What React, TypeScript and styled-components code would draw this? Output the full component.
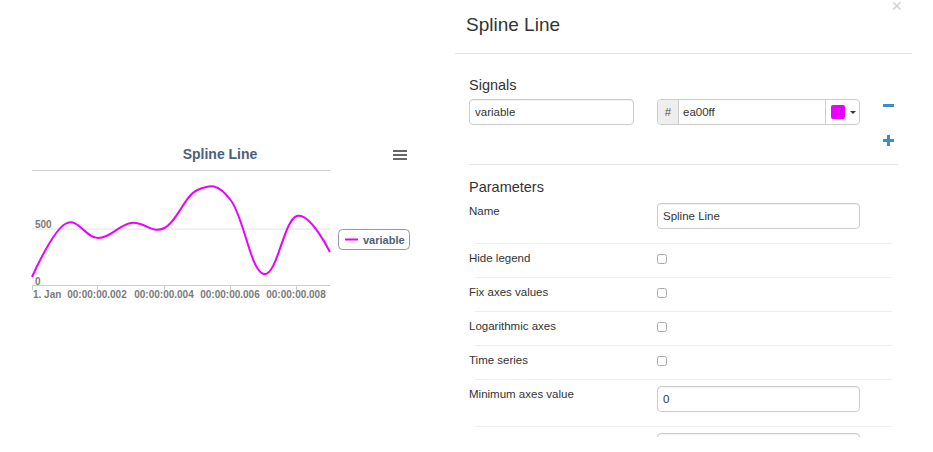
import styled, { createGlobalStyle } from "styled-components";

const GlobalStyle = createGlobalStyle`
  html, body {
    margin: 0;
    padding: 0;
    background: #ffffff;
    font-family: "Liberation Sans", Arial, sans-serif;
    color: #333;
  }
`;

const Page = styled.div`
  display: flex;
  width: 933px;
  height: 452px;
  overflow: hidden;
`;

const PreviewPane = styled.div`
  width: 420px;
  flex-shrink: 0;
  padding-top: 140px;
`;

const Dialog = styled.div`
  position: relative;
  width: 457px;
  height: 437px;
  margin-left: 35px;
  overflow: hidden;
`;

const DialogHeader = styled.div`
  height: 53px;
  border-bottom: 1px solid #e5e5e5;
  padding-left: 11px;
`;

const DialogTitle = styled.h3`
  margin: 0;
  font-size: 19px;
  font-weight: normal;
  line-height: 49px;
  color: #333;
`;

const CloseButton = styled.span`
  position: absolute;
  top: 0;
  right: 10px;
  font-size: 18px;
  line-height: 12px;
  color: #cfcfcf;
`;

const DialogBody = styled.div`
  padding: 0 14px;
`;

const Section = styled.div<{ divided?: boolean }>`
  padding-top: ${({ divided }) => (divided ? "22px" : "13px")};
  padding-bottom: ${({ divided }) => (divided ? "18px" : "0")};
  border-bottom: ${({ divided }) => (divided ? "1px solid #e5e5e5" : "none")};
`;

const SectionTitle = styled.h4<{ spacing: number }>`
  margin: 0 0 ${({ spacing }) => spacing}px;
  font-size: 14.5px;
  font-weight: normal;
  line-height: 18px;
  color: #333;
`;

const SignalRow = styled.div`
  display: flex;
  align-items: flex-start;
`;

const TextInput = styled.input<{ width: number }>`
  box-sizing: border-box;
  width: ${({ width }) => width}px;
  height: 26px;
  padding: 0 5px;
  border: 1px solid #ccc;
  border-radius: 4px;
  box-shadow: inset 0 1px 1px rgba(0, 0, 0, 0.06);
  font-family: "Liberation Sans", Arial, sans-serif;
  font-size: 11.5px;
  color: #333;
  outline: none;
`;

const ColorGroup = styled.div`
  display: flex;
  box-sizing: border-box;
  width: 203px;
  height: 26px;
  margin-left: 23px;
  border: 1px solid #ccc;
  border-radius: 4px;
  overflow: hidden;
`;

const Addon = styled.span`
  display: flex;
  align-items: center;
  justify-content: center;
  width: 20px;
  background: #eeeeee;
  border-right: 1px solid #ccc;
  font-size: 11.5px;
  color: #555;
`;

const ColorText = styled.span`
  flex: 1;
  display: flex;
  align-items: center;
  padding-left: 4px;
  font-size: 11.5px;
  color: #333;
`;

const SwatchButton = styled.span`
  display: flex;
  align-items: center;
  gap: 5px;
  width: 34px;
  box-sizing: border-box;
  padding-left: 5px;
  border-left: 1px solid #ccc;
`;

const Swatch = styled.span<{ color: string }>`
  width: 14px;
  height: 14px;
  border-radius: 2px;
  background: ${({ color }) => color};
`;

const Caret = styled.span`
  width: 0;
  height: 0;
  border-left: 3px solid transparent;
  border-right: 3px solid transparent;
  border-top: 3px solid #333;
`;

const ActionColumn = styled.div`
  display: flex;
  flex-direction: column;
  gap: 24px;
  margin-left: 23px;
  padding-top: 1px;
`;

const FormRow = styled.div<{ first?: boolean; tall?: boolean }>`
  display: flex;
  align-items: flex-start;
  margin: 0 6px;
  padding: 6px 0 ${({ tall }) => (tall ? "14px" : "11px")};
  border-top: 1px solid ${({ first }) => (first ? "transparent" : "#eee")};
`;

const FieldLabel = styled.label`
  width: 188px;
  margin-left: -6px;
  flex-shrink: 0;
  font-size: 11.5px;
  line-height: 16px;
  color: #333;
`;

const CheckBox = styled.input`
  appearance: none;
  box-sizing: border-box;
  width: 10px;
  height: 10px;
  margin: 4px 0 0;
  border: 1px solid #a8a8a8;
  border-radius: 2.5px;
  background: #fff;
`;

const ChartSvg = styled.svg`
  display: block;
  overflow: visible;
`;

// one value per ms step, given as the plot's pixel row
const data = [277, 224, 238, 223, 228, 190, 200, 274, 216, 252].map((y, i) => ({
  x: 32 + i * 33.1,
  y: y - 140,
}));

const splinePath = () => {
  const smoothing = 1.5;
  const denom = smoothing + 1;
  const conts = data.map((p, i) => {
    const last = data[i - 1];
    const next = data[i + 1];
    if (!last || !next) return { lx: p.x, ly: p.y, rx: p.x, ry: p.y };
    const lx = (smoothing * p.x + last.x) / denom;
    let ly = (smoothing * p.y + last.y) / denom;
    const rx = (smoothing * p.x + next.x) / denom;
    let ry = (smoothing * p.y + next.y) / denom;
    const corr = ((ry - ly) * (rx - p.x)) / (rx - lx) + p.y - ry;
    ly += corr;
    ry += corr;
    return { lx, ly, rx, ry };
  });
  let d = `M ${data[0].x} ${data[0].y}`;
  for (let i = 1; i < data.length; i++) {
    d += ` C ${conts[i - 1].rx} ${conts[i - 1].ry} ${conts[i].lx} ${conts[i].ly} ${data[i].x} ${data[i].y}`;
  }
  return d;
};

const xLabels = [
  { x: 97, t: "00:00:00.002" },
  { x: 164, t: "00:00:00.004" },
  { x: 230, t: "00:00:00.006" },
  { x: 296, t: "00:00:00.008" },
];

const axisText = {
  fontFamily: "Liberation Sans, Arial, sans-serif",
  fontSize: 10,
  fontWeight: 700,
  fill: "#7a7a7a",
};

const ChartPreview = () => (
  <ChartSvg width={420} height={170} viewBox="0 0 420 170">
    <text
      x={220}
      y={19}
      textAnchor="middle"
      style={{ fontFamily: "Liberation Sans, Arial, sans-serif", fontSize: 14, fontWeight: 700, fill: "#4d6079" }}
    >
      Spline Line
    </text>
    <g fill="#666">
      <rect x={393} y={10} width={14} height={2} />
      <rect x={393} y={14} width={14} height={2} />
      <rect x={393} y={18} width={14} height={2} />
    </g>
    <line x1={32} x2={330} y1={30.5} y2={30.5} stroke="#d0d0d0" />
    <line x1={32} x2={330} y1={89} y2={89} stroke="#e2e2e2" />
    <line x1={32} x2={330} y1={145.5} y2={145.5} stroke="#c0d0e0" />
    {[32, 97, 164, 230, 296].map((x) => (
      <line key={x} x1={x + 0.5} x2={x + 0.5} y1={146} y2={150} stroke="#c0d0e0" />
    ))}
    <text x={35} y={88} style={axisText}>500</text>
    <text x={35} y={145} style={axisText}>0</text>
    <text x={33} y={158} style={axisText}>1. Jan</text>
    {xLabels.map((l) => (
      <text key={l.t} x={l.x} y={158} textAnchor="middle" style={axisText}>
        {l.t}
      </text>
    ))}
    <path d={splinePath()} fill="none" stroke="#ea00ff" strokeWidth={2} strokeLinejoin="round" />
    <rect x={338.5} y={89.5} width={71} height={20} rx={4} fill="#fff" stroke="#999" />
    <line x1={345} x2={358} y1={99.5} y2={99.5} stroke="#ea00ff" strokeWidth={2} />
    <text
      x={363}
      y={103.5}
      style={{ fontFamily: "Liberation Sans, Arial, sans-serif", fontSize: 11, fontWeight: 700, fill: "#4d6079" }}
    >
      variable
    </text>
  </ChartSvg>
);

const MinusIcon = () => (
  <svg width={11} height={11} viewBox="0 0 11 11">
    <rect x={0} y={4} width={11} height={3} fill="#3f8ccb" />
  </svg>
);

const PlusIcon = () => (
  <svg width={11} height={11} viewBox="0 0 11 11">
    <rect x={0} y={4} width={11} height={3} fill="#3f8ccb" />
    <rect x={4} y={0} width={3} height={11} fill="#3f8ccb" />
  </svg>
);

const checkRows = ["Hide legend", "Fix axes values", "Logarithmic axes", "Time series"];

export default function App() {
  return (
    <Page>
      <GlobalStyle />
      <PreviewPane>
        <ChartPreview />
      </PreviewPane>
      <Dialog>
        <CloseButton>×</CloseButton>
        <DialogHeader>
          <DialogTitle>Spline Line</DialogTitle>
        </DialogHeader>
        <DialogBody>
          <Section divided>
            <SectionTitle spacing={5}>Signals</SectionTitle>
            <SignalRow>
              <TextInput width={165} defaultValue="variable" />
              <ColorGroup>
                <Addon>#</Addon>
                <ColorText>ea00ff</ColorText>
                <SwatchButton>
                  <Swatch color="#ea00ff" />
                  <Caret />
                </SwatchButton>
              </ColorGroup>
              <ActionColumn>
                <MinusIcon />
                <PlusIcon />
              </ActionColumn>
            </SignalRow>
          </Section>
          <Section>
            <SectionTitle spacing={0}>Parameters</SectionTitle>
            <FormRow first tall>
              <FieldLabel>Name</FieldLabel>
              <TextInput width={203} defaultValue="Spline Line" />
            </FormRow>
            {checkRows.map((label) => (
              <FormRow key={label}>
                <FieldLabel>{label}</FieldLabel>
                <CheckBox type="checkbox" />
              </FormRow>
            ))}
            <FormRow tall>
              <FieldLabel>Minimum axes value</FieldLabel>
              <TextInput width={203} defaultValue="0" />
            </FormRow>
            <FormRow tall>
              <FieldLabel>Maximum axes value</FieldLabel>
              <TextInput width={203} defaultValue="" />
            </FormRow>
          </Section>
        </DialogBody>
      </Dialog>
    </Page>
  );
}
